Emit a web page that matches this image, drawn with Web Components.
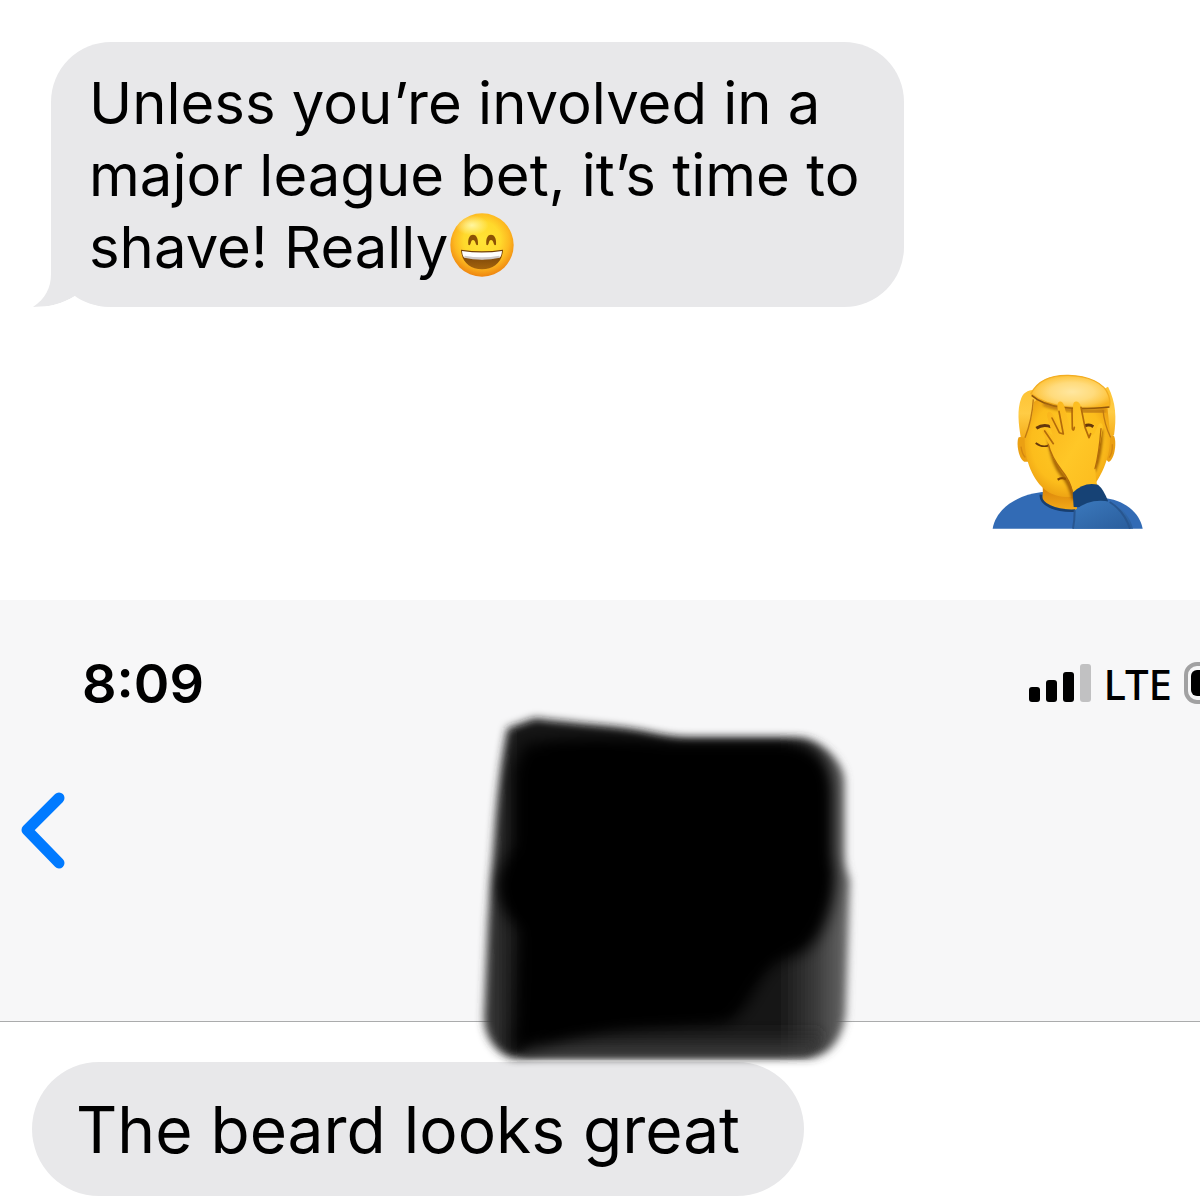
<!DOCTYPE html>
<html lang="en">
<head>
<meta charset="utf-8">
<meta name="viewport" content="width=device-width, initial-scale=1">
<title>Messages</title>
<style>
  body {
    margin: 0;
    background: #fff;
    color: #000;
    font-family: Inter, "Liberation Sans", sans-serif;
  }
</style>
</head>
<body>
<chat-page></chat-page>

<script>
class ChatBubble extends HTMLElement {
  constructor() {
    super();
    this.attachShadow({ mode: "open" });
  }

  static get styles() {
    return /* css */`
      :host {
        display: block;
        position: relative;
        width: fit-content;
        box-sizing: border-box;
        max-width: 853px;
        padding: 25px 34px 24px 38px;
        border-radius: 60px;
        background: #e8e8ea;
        font-size: 58px;
        line-height: 72px;
      }
      :host([large]) {
        padding: 28px 64px 26px 44px;
        border-radius: 67px;
        font-size: 64px;
        line-height: 80px;
      }
      p {
        margin: 0;
      }
      .tail {
        display: none;
        position: absolute;
        left: -18px;
        bottom: 0;
      }
      :host([tail]) .tail {
        display: block;
      }
    `;
  }

  connectedCallback() {
    this.shadowRoot.innerHTML = /* html */`
    <style>${ChatBubble.styles}</style>
    <svg class="tail" width="80" height="60" viewBox="0 0 80 60" aria-hidden="true">
      <path d="M18 0V27C18 41 12 52 0 60C17 60 29 57 42 49L62 20L50 0Z" fill="#e8e8ea"/>
      <path d="M42 49C29 57 17 60 0 60H78C62 60 50 55 42 49Z" fill="#fff"/>
      <path d="M42 49C50 55 62 60 80 60V30H40Z" fill="#e8e8ea"/>
    </svg>
    <p><slot></slot></p>`;
  }
}

class EmojiSmile extends HTMLElement {
  constructor() {
    super();
    this.attachShadow({ mode: "open" });
  }

  static get styles() {
    return /* css */`
      :host {
        display: inline-block;
        margin-left: 2px;
        vertical-align: -9px;
        line-height: 0;
      }
      svg {
        display: block;
      }
    `;
  }

  connectedCallback() {
    this.shadowRoot.innerHTML = /* html */`
    <style>${EmojiSmile.styles}</style>
    <svg width="64" height="64" viewBox="56 41 192 192" role="img" aria-label="Grinning face">
      <defs>
        <radialGradient id="face" cx=".5" cy=".42" r=".58">
          <stop offset="0" stop-color="#ffe436"/>
          <stop offset=".5" stop-color="#ffd92c"/>
          <stop offset=".75" stop-color="#fdb820"/>
          <stop offset="1" stop-color="#ee8410"/>
        </radialGradient>
        <radialGradient id="shine" cx=".5" cy=".5" r=".5">
          <stop offset="0" stop-color="#fff6a0"/>
          <stop offset="1" stop-color="#fff6a0" stop-opacity="0"/>
        </radialGradient>
        <linearGradient id="mouth" x1="0" y1="0" x2="0" y2="1">
          <stop offset="0" stop-color="#6b3a08"/>
          <stop offset="1" stop-color="#a5640c"/>
        </linearGradient>
      </defs>
      <circle cx="152" cy="137" r="95" fill="url(#face)"/>
      <ellipse cx="122" cy="78" rx="50" ry="30" fill="url(#shine)"/>
      <path d="M111 136C109 115 116 106 125 106S141 115 140 136C137 139 134 137 133 132C131 125 129 122 125 122S120 125 118 132C117 137 114 139 111 136Z" fill="#8c5205"/>
      <path d="M165 136C163 115 170 106 179 106S196 115 194 136C191 139 188 137 187 132C185 125 183 122 179 122S174 125 172 132C171 137 168 139 165 136Z" fill="#8c5205"/>
      <path d="M89 151Q152 161 215 151C213 188 188 210 152 210S91 188 89 151Z" fill="url(#mouth)"/>
      <path d="M92 155Q152 164 212 155C211 165 209 171 206 174Q152 185 98 174C95 171 93 165 92 155Z" fill="#fff"/>
      <path d="M98 175Q152 187 206 175L204 169Q152 179 100 169Z" fill="#cfcac9"/>
    </svg>`;
  }
}

class EmojiFacepalm extends HTMLElement {
  constructor() {
    super();
    this.attachShadow({ mode: "open" });
  }

  static get styles() {
    return /* css */`
      :host {
        display: block;
      }
      svg {
        display: block;
      }
    `;
  }

  connectedCallback() {
    this.shadowRoot.innerHTML = /* html */`
    <style>${EmojiFacepalm.styles}</style>
    <svg width="152" height="155" viewBox="36 28 456 465" role="img" aria-label="Man facepalming">
      <defs>
        <radialGradient id="skin" cx=".5" cy=".45" r=".6">
          <stop offset="0" stop-color="#ffcb26"/>
          <stop offset=".7" stop-color="#fcbd1c"/>
          <stop offset="1" stop-color="#e99a10"/>
        </radialGradient>
        <radialGradient id="hair" cx=".52" cy=".5" r=".56">
          <stop offset="0" stop-color="#ffe7a0"/>
          <stop offset=".5" stop-color="#ffdb7c"/>
          <stop offset=".8" stop-color="#fec94a"/>
          <stop offset="1" stop-color="#f8b420"/>
        </radialGradient>
        <linearGradient id="side" x1="0" y1="0" x2="0" y2="1">
          <stop offset="0" stop-color="#fdc334"/>
          <stop offset=".5" stop-color="#ffcc45"/>
          <stop offset="1" stop-color="#f5ad1a"/>
        </linearGradient>
        <linearGradient id="hand" x1="0" y1="0" x2="1" y2="1">
          <stop offset="0" stop-color="#f9b118"/>
          <stop offset=".5" stop-color="#ffc727"/>
          <stop offset="1" stop-color="#fbb91c"/>
        </linearGradient>
        <linearGradient id="neck" x1="0" y1="0" x2="0" y2="1">
          <stop offset="0" stop-color="#d98208"/>
          <stop offset="1" stop-color="#f4ac1a"/>
        </linearGradient>
        <linearGradient id="sleeve" x1="0" y1="0" x2="1" y2="1">
          <stop offset="0" stop-color="#3b79bd"/>
          <stop offset="1" stop-color="#2a5d9c"/>
        </linearGradient>
        <filter id="soft" x="-40%" y="-20%" width="180%" height="140%">
          <feGaussianBlur stdDeviation="4"/>
        </filter>
      </defs>
      <path d="M38 492C47 437 103 392 186 382L379 401C433 409 478 441 488 492Z" fill="#326bb5"/>
      <path d="M188 368H291V439C250 442 198 431 184 402Q190 393 188 368Z" fill="url(#neck)"/>
      <path d="M183 390C179 418 224 441 286 438" fill="none" stroke="#173e70" stroke-width="8"/>
      <path d="M116 218C108 232 115 284 133 291H148L143 214Z" fill="#eba013"/>
      <path d="M402 214C410 229 406 282 386 292L371 278L378 214Z" fill="#eba013"/>
      <path d="M123 246Q127 272 136 278M397 239Q398 267 387 279" fill="none" stroke="#d58710" stroke-width="4"/>
      <path d="M151 111C192 91 337 96 390 127V226C389 291 352 360 324 379C289 407 230 400 199 378C160 350 133 287 134 221Z" fill="url(#skin)"/>
      <path d="M172 74C150 76 132 80 124 100C110 134 116 180 122 217L136 219C150 182 158 152 162 112L190 90Z" fill="url(#side)"/>
      <path d="M355 128L382 125L391 218L402 212C410 160 408 112 384 66L340 90Z" fill="url(#side)"/>
      <path d="M153 87C173 46 213 31 265 32C323 33 374 54 386 93Q392 112 388 127C312 136 212 133 153 87Z" fill="url(#hair)" stroke="#f2ad22" stroke-width="4"/>
      <path d="M155 92C200 132 280 138 388 127" fill="none" stroke="#8d540d" stroke-width="5"/>
      <path d="M190 118Q240 142 375 139" fill="none" stroke="#b8730f" stroke-width="10" filter="url(#soft)"/>
      <path d="M160 104Q156 166 135 219M369 136Q373 180 392 218" fill="none" stroke="#c07a12" stroke-width="4"/>
      <path d="M169 191Q190 176 214 187M313 185Q327 177 340 186" fill="none" stroke="#65380c" stroke-width="9"/>
      <path d="M167 235Q184 249 205 243" fill="none" stroke="#65380c" stroke-width="5"/>
      <path d="M233 345Q246 336 258 344" fill="none" stroke="#7d4207" stroke-width="7"/>
      <path d="M208 218Q217 294 246 329Q269 352 282 405M363 195Q362 272 341 320" fill="none" stroke="#985706" stroke-width="11" filter="url(#soft)"/>
      <path d="M285 406C280 374 269 351 253 330C228 294 210 269 207 240L188 205Q185 190 197 193L219 216L201 154C200 138 213 137 218 149L241 187L232 126C231 106 248 107 252 122L271 191Q275 202 280 190L279 124C279 104 299 107 303 126L313 188L329 211C336 216 346 208 347 198L355 181C361 171 370 177 368 190C364 219 356 260 349 299Q343 331 352 364V407Z" fill="url(#hand)"/>
      <path d="M194 199L220 237M216 160L238 204L250 208L237 140M276 135L277 193Q281 201 283 188M303 128L315 188L327 219L332 207" fill="none" stroke="#b36b0a" stroke-width="5" stroke-linecap="round" stroke-linejoin="round"/>
      <path d="M205 239C216 286 242 311 258 335Q276 362 281 402M363 192Q357 270 345 312" fill="none" stroke="#b36b0a" stroke-width="4" stroke-linecap="round"/>
      <path d="M281 427L278 384Q312 350 354 360Q371 374 384 409V430Z" fill="#164275"/>
      <path d="M283 438Q329 399 389 411C429 430 452 460 459 492H279Q287 464 283 438Z" fill="url(#sleeve)"/>
      <path d="M284 437Q284 468 279 492M389 412Q432 438 450 492" fill="none" stroke="#285690" stroke-width="6"/>
    </svg>`;
  }
}

class StatusBar extends HTMLElement {
  constructor() {
    super();
    this.attachShadow({ mode: "open" });
  }

  static get styles() {
    return /* css */`
      :host {
        display: flex;
        justify-content: space-between;
        align-items: center;
        height: 62px;
        padding-left: 82px;
      }
      time {
        font-size: 54px;
        font-weight: 600;
      }
      .signal {
        display: flex;
        align-items: center;
        gap: 12px;
        font-family: "Noto Sans", sans-serif;
        font-size: 42px;
        font-weight: 500;
      }
      svg {
        display: block;
      }
    `;
  }

  connectedCallback() {
    this.shadowRoot.innerHTML = /* html */`
    <style>${StatusBar.styles}</style>
    <time>8:09</time>
    <div class="signal">
      <svg width="62" height="40" viewBox="0 0 62 40" role="img" aria-label="Signal strength">
        <rect x="0" y="24" width="11" height="15" rx="3"/>
        <rect x="17" y="17" width="11" height="22" rx="3"/>
        <rect x="34" y="9" width="11" height="30" rx="3"/>
        <rect x="51" y="1" width="11" height="38" rx="3" fill="#c1c1c2"/>
      </svg>
      <span>LTE</span>
      <svg width="16" height="42" viewBox="0 0 16 42" role="img" aria-label="Battery">
        <rect x="2" y="2" width="80" height="38" rx="11" fill="none" stroke="#a1a1a2" stroke-width="4"/>
        <rect x="7" y="8" width="70" height="26" rx="6"/>
      </svg>
    </div>`;
  }
}

class ChatHeader extends HTMLElement {
  constructor() {
    super();
    this.attachShadow({ mode: "open" });
  }

  static get styles() {
    return /* css */`
      :host {
        display: block;
        position: relative;
        box-sizing: border-box;
        padding: 52px 0 143px;
        border-bottom: 1px solid #aaabac;
        background: #f7f7f8;
      }
      nav {
        display: flex;
        padding: 68px 0 0 12px;
      }
      button {
        padding: 8px;
        border: 0;
        background: none;
        line-height: 0;
      }
      .marker {
        position: absolute;
        z-index: 1;
        top: 100px;
        left: calc(50% - 140px);
      }
    `;
  }

  connectedCallback() {
    this.shadowRoot.innerHTML = /* html */`
    <style>${ChatHeader.styles}</style>
    <status-bar></status-bar>
    <nav>
      <button type="button" aria-label="Back">
        <svg width="46" height="80" viewBox="0 0 46 80" fill="none" stroke="#007aff" stroke-width="11" stroke-linecap="round" stroke-linejoin="round">
          <path d="M39 8L7 40L39 73"/>
        </svg>
      </button>
    </nav>
    <svg class="marker" width="420" height="380" viewBox="0 0 1260 1140" aria-hidden="true">
      <defs>
        <filter id="edge" x="-10%" y="-10%" width="120%" height="120%">
          <feGaussianBlur stdDeviation="13"/>
        </filter>
        <filter id="core" x="-10%" y="-10%" width="120%" height="120%">
          <feGaussianBlur stdDeviation="22"/>
        </filter>
        <linearGradient id="stroke" x1="0" y1="0" x2="1" y2="0">
          <stop offset="0" stop-color="#3c3c3c"/>
          <stop offset=".1" stop-color="#151515"/>
          <stop offset=".8" stop-color="#151515"/>
          <stop offset=".9" stop-color="#383838"/>
          <stop offset="1" stop-color="#6c6c6c"/>
        </linearGradient>
        <linearGradient id="foot" x1="0" y1="0" x2="0" y2="1">
          <stop offset="0" stop-color="#222" stop-opacity="0"/>
          <stop offset="1" stop-color="#424242"/>
        </linearGradient>
      </defs>
      <path d="M142 85L225 55C350 72 480 76 580 100Q640 115 700 114H1020C1080 118 1154 185 1154 245V465Q1153 500 1170 540L1157 940C1150 1010 1112 1072 1040 1074H160C112 1065 70 1010 72 950L84 660L106 360Q120 190 142 85Z" fill="url(#stroke)" filter="url(#edge)"/>
      <path d="M240 970H1080Q1110 1010 1040 1068H180Z" fill="url(#foot)" filter="url(#edge)"/>
      <path d="M195 130C340 115 470 110 640 136H1000C1070 140 1112 195 1115 270V470Q1135 520 1115 610C1090 700 1050 770 970 775C890 810 880 930 800 968L570 980Q400 990 280 1025L175 1052Q145 1035 165 980L180 690Q112 620 116 540L160 430V210Z" fill="#000" filter="url(#core)"/>
      <path d="M260 150H980Q1075 165 1085 260V520Q1075 680 960 740Q870 790 810 910L770 945L460 960L250 1000L215 930V680L145 600V520L220 430Z" fill="#000" filter="url(#core)"/>
    </svg>`;
  }
}

class ChatPage extends HTMLElement {
  constructor() {
    super();
    this.attachShadow({ mode: "open" });
  }

  static get styles() {
    return /* css */`
      :host {
        display: block;
        overflow: hidden;
      }
      .first {
        display: flex;
        flex-direction: column;
        gap: 67px;
        padding: 42px 56px 71px 51px;
      }
      emoji-facepalm {
        align-self: flex-end;
      }
      .second {
        padding: 40px 32px 4px;
      }
    `;
  }

  connectedCallback() {
    this.shadowRoot.innerHTML = /* html */`
    <style>${ChatPage.styles}</style>
    <section class="first">
      <chat-bubble tail>Unless you’re involved in a major league bet, it’s time to shave! Really<emoji-smile></emoji-smile></chat-bubble>
      <emoji-facepalm></emoji-facepalm>
    </section>
    <chat-header></chat-header>
    <section class="second">
      <chat-bubble large>The beard looks great</chat-bubble>
    </section>`;
  }
}

customElements.define("chat-bubble", ChatBubble);
customElements.define("emoji-smile", EmojiSmile);
customElements.define("emoji-facepalm", EmojiFacepalm);
customElements.define("status-bar", StatusBar);
customElements.define("chat-header", ChatHeader);
customElements.define("chat-page", ChatPage);
</script>
</body>
</html>
